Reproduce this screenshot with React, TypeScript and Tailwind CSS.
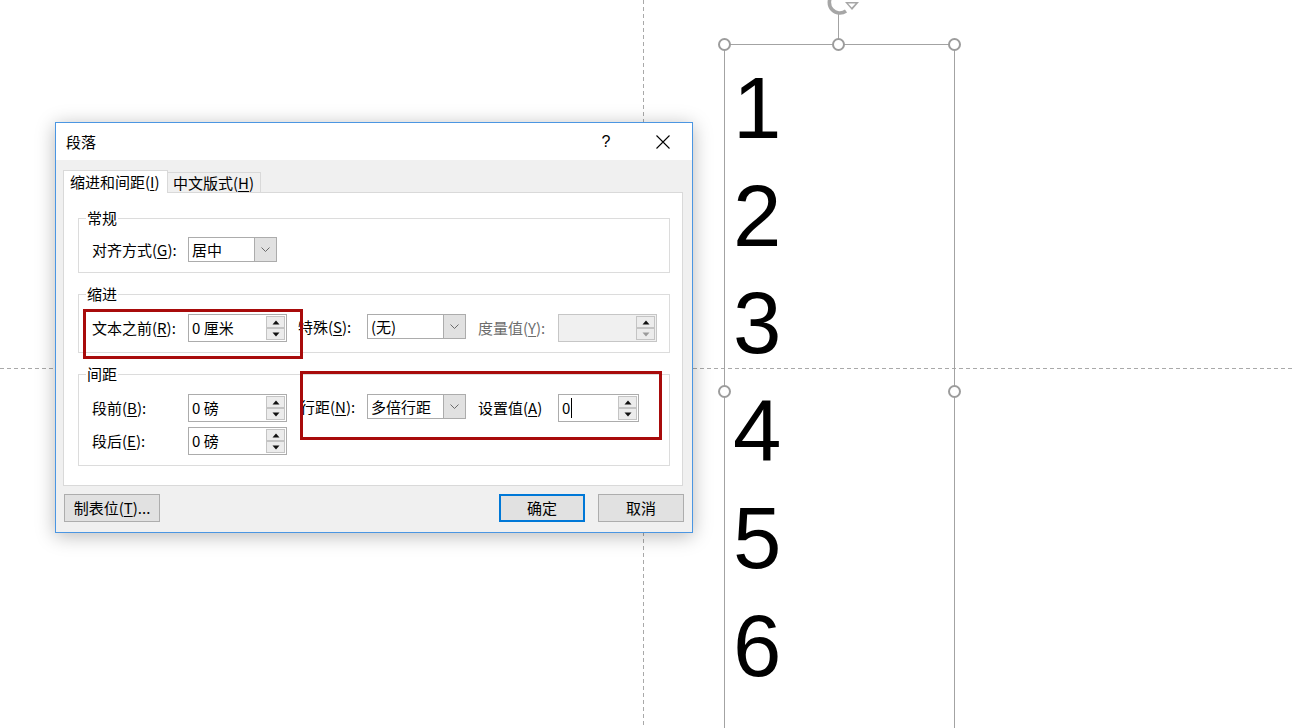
import React from 'react';

const U = ({ c }: { c: string }) => (
  <span className="underline underline-offset-[2px] decoration-1">{c}</span>
);

function SpinArrows({ disabled }: { disabled?: boolean }) {
  return (
    <div className="flex flex-col py-[1px] pr-[1px]">
      <div className="w-[19px] h-[12px] border border-[#c4c4c4] bg-[#ececec] flex items-center justify-center">
        <svg width="8" height="5" viewBox="0 0 8 5">
          <path d="M4 0.5 L7.5 4.5 L0.5 4.5 Z" fill="#111" />
        </svg>
      </div>
      <div className="w-[19px] h-[12px] border border-[#c4c4c4] bg-[#ececec] flex items-center justify-center">
        <svg width="8" height="5" viewBox="0 0 8 5">
          <path d="M0.5 0.5 L7.5 0.5 L4 4.5 Z" fill={disabled ? '#9a9a9a' : '#111'} />
        </svg>
      </div>
    </div>
  );
}

function Spin({ className, children, disabled }: { className: string; children?: React.ReactNode; disabled?: boolean }) {
  return (
    <div
      className={`${className} h-[28px] border flex justify-between ${
        disabled ? 'border-[#c6c6c6] bg-[#f0f0f0]' : 'border-[#acacac] bg-white'
      }`}
    >
      <div className="pl-[3px] leading-[26px] text-[15px] flex items-center">{children}</div>
      <SpinArrows disabled={disabled} />
    </div>
  );
}

function Combo({ children, className }: { children: React.ReactNode; className?: string }) {
  return (
    <div className={`${className ?? 'w-[99px]'} h-[25px] border border-[#acacac] bg-white flex`}>
      <div className="flex-1 pl-[3px] leading-[23px] text-[15px]">{children}</div>
      <div className="w-[22px] border-l border-[#acacac] bg-[#e1e1e1] flex items-center justify-center">
        <svg width="9" height="5" viewBox="0 0 9 5">
          <path d="M0.5 0.5 L4.5 4.5 L8.5 0.5" stroke="#6a6a6a" strokeWidth="1" fill="none" />
        </svg>
      </div>
    </div>
  );
}

function Group({ title, className, children }: { title: string; className: string; children: React.ReactNode }) {
  return (
    <div className={`relative ml-[14px] w-[592px] border border-[#dcdcdc] ${className}`}>
      <span className="absolute -top-[11px] left-[7px] bg-white px-[1px] leading-[20px] text-[15px]">{title}</span>
      {children}
    </div>
  );
}

function Btn({ children, primary, className }: { children: React.ReactNode; primary?: boolean; className?: string }) {
  return (
    <div
      className={`h-[28px] flex items-center justify-center text-[15px] bg-[#e1e1e1] ${
        primary ? 'border-2 border-[#0078d7]' : 'border border-[#adadad]'
      } ${className ?? ''}`}
    >
      {children}
    </div>
  );
}

export default function App() {
  const digits = ['1', '2', '3', '4', '5', '6'];
  return (
    <div className="relative w-[1294px] h-[728px] overflow-hidden bg-white">
      {/* guides */}
      <svg className="absolute left-0 top-0" width="1294" height="728">
        <line x1="0" y1="368.5" x2="1294" y2="368.5" stroke="#a9a9a9" strokeWidth="1" strokeDasharray="4 3" />
        <line x1="643.5" y1="0" x2="643.5" y2="728" stroke="#a9a9a9" strokeWidth="1" strokeDasharray="4 3" />
      </svg>

      {/* text box on slide */}
      <div className="absolute left-[724px] top-[44px] w-[231px] h-[700px] border border-[#a3a3a3] pl-[8px] pt-[9px] font-['Liberation_Sans',Arial,sans-serif] text-[87px] leading-[107.5px] text-black">
        {digits.map((d) => (
          <div key={d}>{d}</div>
        ))}
      </div>
      <div className="absolute left-[838px] top-[14px] w-[1px] h-[30px] bg-[#a3a3a3]" />
      <svg className="absolute left-[822px] top-0" width="40" height="18" viewBox="0 0 40 18">
        <path d="M24 -6 A 10.5 10.5 0 1 0 24 11" stroke="#a6a6a6" strokeWidth="3.6" fill="none" />
        <path d="M23 2 L37 2 L30 10 Z" fill="#a6a6a6" />
        <path d="M26 3.5 L33.5 3.5 L29.8 7.5 Z" fill="#ffffff" />
      </svg>
      {[
        'left-[718px] top-[38px]',
        'left-[832px] top-[38px]',
        'left-[948px] top-[38px]',
        'left-[718px] top-[385px]',
        'left-[948px] top-[385px]',
      ].map((c) => (
        <div key={c} className={`absolute ${c} w-[13px] h-[13px] rounded-full border-2 border-[#9c9c9c] bg-white`} />
      ))}

      {/* dialog */}
      <div className="absolute left-[55px] top-[122px] w-[638px] h-[411px] border border-[#4b96e2] bg-[#f0f0f0] flex flex-col shadow-[0_3px_18px_rgba(0,0,0,0.28)] font-['Noto_Sans_CJK_SC','Noto_Sans',sans-serif] text-black">
        {/* title bar */}
        <div className="h-[37px] bg-white flex items-center shrink-0">
          <span className="pl-[10px] text-[15px] leading-[20px]">段落</span>
          <div className="flex-1" />
          <span className="w-[20px] text-center font-['Liberation_Sans',sans-serif] text-[16px] leading-[20px]">?</span>
          <div className="ml-[18px] w-[58px] flex items-center justify-center">
            <svg width="14" height="14" viewBox="0 0 14 14">
              <path d="M0.5 0.5 L13.5 13.5 M13.5 0.5 L0.5 13.5" stroke="#000" strokeWidth="1.1" />
            </svg>
          </div>
        </div>

        {/* body */}
        <div className="flex-1 flex flex-col pt-[10px]">
          {/* tabs */}
          <div className="ml-[7px] h-[22px] flex items-end">
            <div className="relative z-10 h-[23px] -mb-[1px] px-[6px] bg-white border-x border-t border-[#d9d9d9] text-[15px] leading-[21px] w-[105px]">
              缩进和间距(<U c="I" />)
            </div>
            <div className="h-[20px] w-[94px] -ml-[1px] border-t border-r border-[#d9d9d9] bg-[#f0f0f0] text-[15px] leading-[19px] pl-[6px]">
              中文版式(<U c="H" />)
            </div>
          </div>

          {/* panel */}
          <div className="ml-[7px] w-[620px] h-[294px] border border-[#d9d9d9] bg-white pt-[25px]">
            <Group title="常规" className="h-[55px] pt-[18px]">
              <div className="flex items-start pl-[13px]">
                <span className="w-[96px] text-[15px] leading-[25px]">
                  对齐方式(<U c="G" />):
                </span>
                <Combo className="w-[89px]">居中</Combo>
              </div>
            </Group>

            <Group title="缩进" className="mt-[21px] h-[59px] pt-[19px]">
              <div className="flex items-start pl-[13px]">
                <span className="w-[96px] text-[15px] leading-[28px]">
                  文本之前(<U c="R" />):
                </span>
                <Spin className="w-[99px]">0 厘米</Spin>
                <span className="ml-[11px] w-[69px] text-[15px] leading-[26px]">
                  特殊(<U c="S" />):
                </span>
                <Combo>(无)</Combo>
                <span className="ml-[12px] w-[80px] text-[15px] leading-[28px] text-[#6d6d6d]">
                  度量值(<U c="Y" />):
                </span>
                <Spin className="w-[99px]" disabled />
              </div>
            </Group>

            <Group title="间距" className="mt-[21px] h-[92px] pt-[19px]">
              <div className="flex flex-col gap-[5px] pl-[13px]">
                <div className="flex items-start">
                  <span className="w-[96px] text-[15px] leading-[28px]">
                    段前(<U c="B" />):
                  </span>
                  <Spin className="w-[99px]">0 磅</Spin>
                  <span className="ml-[13px] w-[67px] text-[15px] leading-[26px]">
                    行距(<U c="N" />):
                  </span>
                  <Combo>多倍行距</Combo>
                  <span className="ml-[12px] w-[80px] text-[15px] leading-[28px]">
                    设置值(<U c="A" />)
                  </span>
                  <Spin className="w-[81px]">
                    <span>0</span>
                    <span className="ml-[1px] inline-block w-[1px] h-[20px] bg-black" />
                  </Spin>
                </div>
                <div className="flex items-start">
                  <span className="w-[96px] text-[15px] leading-[28px]">
                    段后(<U c="E" />):
                  </span>
                  <Spin className="w-[99px]">0 磅</Spin>
                </div>
              </div>
            </Group>
          </div>

          {/* buttons */}
          <div className="mt-[8px] flex items-start px-[8px]">
            <Btn className="w-[96px]">
              制表位(<U c="T" />)...
            </Btn>
            <div className="flex-1" />
            <Btn primary className="w-[86px]">
              确定
            </Btn>
            <Btn className="ml-[13px] w-[86px]">取消</Btn>
          </div>
        </div>

        {/* annotation boxes */}
        <div className="absolute left-[27px] top-[186px] w-[220px] h-[50px] border-[3px] border-[#a80b0b]" />
        <div className="absolute left-[244px] top-[248px] w-[362px] h-[69px] border-[3px] border-[#a80b0b]" />
      </div>
    </div>
  );
}
